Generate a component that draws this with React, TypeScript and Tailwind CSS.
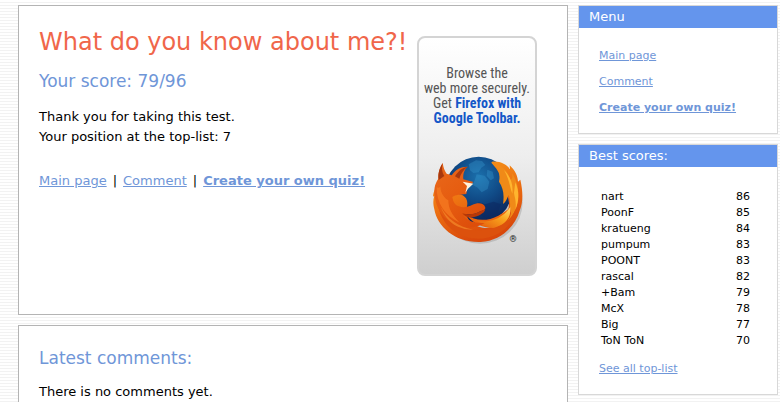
import type { ReactNode } from 'react';

const scores: [string, number][] = [
  ['nart', 86],
  ['PoonF', 85],
  ['kratueng', 84],
  ['pumpum', 83],
  ['POONT', 83],
  ['rascal', 82],
  ['+Bam', 79],
  ['McX', 78],
  ['Big', 77],
  ['ToN ToN', 70],
];

const link = 'text-[#6f96d8] underline';

function FirefoxLogo() {
  return (
    <svg viewBox="60 45 285 270" className="h-[90px] w-[95px]" aria-hidden="true">
      <defs>
        <radialGradient id="globe" cx="0.5" cy="0.3" r="0.7">
          <stop offset="0" stopColor="#1b70ac" />
          <stop offset="0.5" stopColor="#104a86" />
          <stop offset="1" stopColor="#0b2358" />
        </radialGradient>
        <linearGradient id="fur" x1="0" y1="0" x2="0.7" y2="1">
          <stop offset="0" stopColor="#e8691c" />
          <stop offset="0.55" stopColor="#e65c10" />
          <stop offset="1" stopColor="#dd4e0b" />
        </linearGradient>
        <linearGradient id="tail" x1="0" y1="0" x2="0.4" y2="1">
          <stop offset="0" stopColor="#f6a21c" />
          <stop offset="0.5" stopColor="#ee7412" />
          <stop offset="1" stopColor="#d9480b" />
        </linearGradient>
        <linearGradient id="flame" x1="1" y1="0" x2="0" y2="1">
          <stop offset="0" stopColor="#ffe070" />
          <stop offset="0.4" stopColor="#f9a31c" />
          <stop offset="1" stopColor="#e2560d" />
        </linearGradient>
      </defs>
      <ellipse cx="210" cy="190" rx="128" ry="124" fill="#6b6b6b" opacity="0.25" />
      <circle cx="206" cy="153" r="100" fill="url(#globe)" />
      <path d="M176 76l22-12 18 2 10 12-12 8-8 14-16 2-10-8zM200 106l24 4 14 18-5 22-18 10-12-14-14-8zM232 92l16 6 4 20-10 6-12-14z" fill="#3a9bd0" opacity="0.35" />
      <path d="M205 190l20 6 26-8 22 8-12 28-32 14-20-12z" fill="#0c2a63" opacity="0.6" />
      <path d="M246 68c26-2 43 8 54 23l-1-12c16 15 24 31 25 49l7-6c8 36 9 66-2 93-14 48-57 90-117 94-74 3-130-44-139-98-4-17-4-28 0-41l-4 3c1-16 8-25 14-32l1 29 14-2c31-9 90-10 70 44-4 34 38 62 78 53 35-8 51-39 51-73-3-31-18-52-28-65 4-23-8-37-25-56z" fill="url(#tail)" />
      <path d="M248 70c28 8 47 27 53 53 7-3 7-12 5-20 20 30 22 60 16 88-5 24-15 43-32 58 10-27 14-57 6-82-5 12-8 21-17 28 4-29 1-47-12-67 6-26-3-41-19-58z" fill="#f08a18" />
      <path d="M301 205c3 32-17 54-55 63-28 8-51 8-77-1-42-14-66-37-84-69 3 35 27 70 62 88 34 17 81 18 116-1 29-15 48-43 54-73-7 14-15 25-25 35 10-14 14-28 9-42z" fill="#dc510d" />
      <path d="M170 228c24 18 62 20 95 2 14-8 26-15 36-26 3 34-18 55-52 63-34-1-60-14-79-39z" fill="#e9650f" />
      <path d="M301 204c-14 20-30 32-54 40-16 5-32 4-48 0 16 14 32 21 50 23 34-8 55-29 52-63z" fill="url(#flame)" />
      <path d="M316 130c13 29 11 58 0 82 4-23-2-36-4-50zM282 93c20 20 28 43 25 71-8-21-9-44-25-71z" fill="#ffb52e" />
      <path d="M98 72c-9 15-14 30-13 47-11 16-15 34-10 59 8 44 41 82 91 88 21 2 41-3 58-14-38 2-59-10-66-29 18 5 33 4 50-5 12-5 21-7 17-15-3-7-11-12-23-10-20 4-33 18-55 9-13-4-18-15-20-28 10-8 25-6 42-9l4-21 17-15-30-8c-1-17 2-28 13-38-23 0-37 10-48 26l-15-5c-7-9-10-19-12-32z" fill="url(#fur)" />
      <path d="M98 72c-4 15-2 29 5 39l-17 12c-3-18 2-36 12-51zM173 83c-18 3-29 14-38 29 4 3 8 5 13 7 4-14 12-27 25-36z" fill="#a8380e" />
      <path d="M190 134l-32-6 13 13-5 21 8-13z" fill="#fff3df" />
      <path d="M80 145c-1 48 26 86 69 106-24-22-34-44-34-67-10-5-24-20-24-42-3 6-7 5-11 3z" fill="#f57b22" opacity="0.75" />
      <path d="M93 205c17 34 51 58 96 67-38 1-79-18-96-67z" fill="#f38a2b" opacity="0.7" />
      <path d="M157 223c20 6 37 3 54-6 10-5 15-5 14-10 4 13-16 23-33 27-16 4-28 0-35-11z" fill="#b93807" />
    </svg>
  );
}

function FirefoxBanner() {
  return (
    <a
      href="#firefox"
      className="flex h-[240px] w-[120px] shrink-0 flex-col items-center rounded-lg border-2 border-[#d4d4d4] bg-linear-to-b from-white via-[#eeeeee] to-[#cfcfcf] pt-7 font-['Liberation_Sans_Narrow','Roboto_Condensed','Liberation_Sans',sans-serif] text-[#555555]"
    >
      <span className="block text-center text-[14px] leading-[15px] whitespace-nowrap">
        Browse the
        <br />
        web more securely.
        <br />
        Get <b className="text-[#1457c8]">Firefox with</b>
        <br />
        <b className="text-[#1457c8]">Google Toolbar.</b>
      </span>
      <span className="relative mt-7 block">
        <FirefoxLogo />
        <span className="absolute right-2 bottom-0 text-[9px] leading-none text-[#222222]">®</span>
      </span>
    </a>
  );
}

function SideBox({ title, children }: { title: string; children: ReactNode }) {
  return (
    <section className="border border-[#d8d8d8] bg-white text-[11px]">
      <h2 className="bg-[#6495ed] px-2.5 text-[13px] leading-[22px] text-white">{title}</h2>
      <div className="px-5 pt-5 pb-[17px]">{children}</div>
    </section>
  );
}

export default function App() {
  return (
    <div className="flex min-h-screen gap-2.5 bg-[repeating-linear-gradient(to_bottom,#ffffff_0px,#ffffff_2px,#f2f2f2_2px,#f2f2f2_3px)] pt-[5px] pr-0.5 pl-[18px] font-['Verdana','DejaVu_Sans',sans-serif] text-[13px] leading-5 text-black">
      <main className="flex min-w-0 flex-1 flex-col gap-2.5">
        <section className="flex min-h-[310px] items-start justify-between border border-[#b4b4b4] bg-white pr-[30px] pl-5">
          <div className="pt-5 whitespace-nowrap">
            <h1 className="text-[24px] leading-8 text-[#f0664a]">What do you know about me?!</h1>
            <h2 className="mt-[11px] text-[17px] leading-6 text-[#6f96d8]">Your score: 79/96</h2>
            <p className="mt-3.5">
              Thank you for taking this test.
              <br />
              Your position at the top-list: 7
            </p>
            <nav className="mt-6">
              <a href="#main" className={link}>Main page</a>
              <span className="mx-1.5">|</span>
              <a href="#comment" className={link}>Comment</a>
              <span className="mx-1.5">|</span>
              <a href="#create" className={`${link} font-bold`}>Create your own quiz!</a>
            </nav>
          </div>
          <div className="pt-[30px]">
            <FirefoxBanner />
          </div>
        </section>
        <section className="flex-1 border border-b-0 border-[#b4b4b4] bg-white px-5 pt-5">
          <h2 className="text-[17px] leading-6 text-[#6f96d8]">Latest comments:</h2>
          <p className="mt-3">There is no comments yet.</p>
        </section>
      </main>
      <aside className="flex w-[200px] shrink-0 flex-col gap-2.5">
        <SideBox title="Menu">
          <ul className="flex flex-col gap-2.5 leading-4">
            <li><a href="#main" className={link}>Main page</a></li>
            <li><a href="#comment" className={link}>Comment</a></li>
            <li><a href="#create" className={`${link} font-bold`}>Create your own quiz!</a></li>
          </ul>
        </SideBox>
        <SideBox title="Best scores:">
          <table className="mt-0.5 w-full leading-4">
            <tbody>
              {scores.map(([name, score]) => (
                <tr key={name}>
                  <td className="p-0 pl-0.5">{name}</td>
                  <td className="p-0 pr-[7px] text-right">{score}</td>
                </tr>
              ))}
            </tbody>
          </table>
          <p className="mt-3 leading-4"><a href="#top" className={link}>See all top-list</a></p>
        </SideBox>
      </aside>
    </div>
  );
}
